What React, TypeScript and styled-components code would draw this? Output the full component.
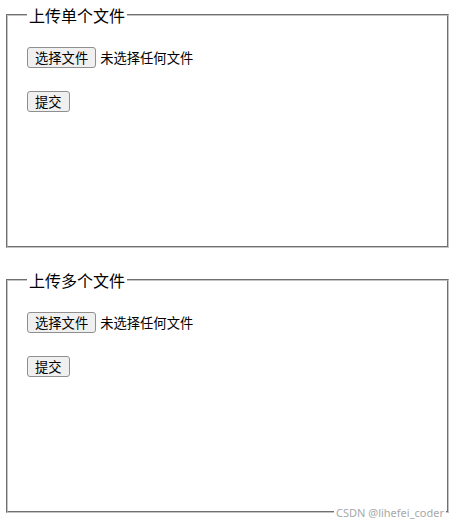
import React from "react";
import styled, { createGlobalStyle } from "styled-components";

const Global = createGlobalStyle`
  html, body { margin: 0; padding: 0; background: #fff; }
  body { font-family: "Microsoft YaHei", "Noto Sans CJK SC", "Noto Sans", sans-serif; }
`;

const Page = styled.div`
  position: relative;
  width: 457px;
  height: 530px;
  box-sizing: border-box;
  padding: 5px 0 0 6px;
  display: flex;
  flex-direction: column;
  gap: 22px;
`;

const Box = styled.fieldset`
  margin: 0;
  width: 443px;
  height: 243px;
  box-sizing: border-box;
  border: 2px groove #c4c4c4;
  padding: 22px 19px 0 19px;
  min-width: 0;
`;

const Legend = styled.legend`
  padding: 0 2px;
  font-size: 16px;
  line-height: 20px;
  color: #000;
`;

const Row = styled.div`
  display: flex;
  align-items: center;
  gap: 4px;
  height: 21px;
`;

const Btn = styled.button`
  height: 21px;
  box-sizing: border-box;
  padding: 0 7px;
  font-family: inherit;
  font-size: 13.3px;
  line-height: 19px;
  color: #000;
  background: #f0f0f0;
  border: 1px solid #8f8f8f;
  border-radius: 3px;
  margin: 0;
`;

const Hint = styled.span`
  font-size: 13.3px;
  color: #000;
`;

const Submit = styled(Btn)`
  margin-top: 23px;
  display: block;
`;

const Watermark = styled.div`
  position: absolute;
  left: 334px;
  top: 505px;
  padding: 0 2px;
  font-family: "Noto Sans", sans-serif;
  font-size: 11px;
  line-height: 15px;
  color: #a8a8a8;
  background: #fff;
`;

function Upload({ title }: { title: string }) {
  return (
    <Box>
      <Legend>{title}</Legend>
      <Row>
        <Btn type="button">选择文件</Btn>
        <Hint>未选择任何文件</Hint>
      </Row>
      <Submit type="button">提交</Submit>
    </Box>
  );
}

export default function App() {
  return (
    <>
      <Global />
      <Page>
        <Upload title="上传单个文件" />
        <Upload title="上传多个文件" />
        <Watermark>CSDN @lihefei_coder</Watermark>
      </Page>
    </>
  );
}
